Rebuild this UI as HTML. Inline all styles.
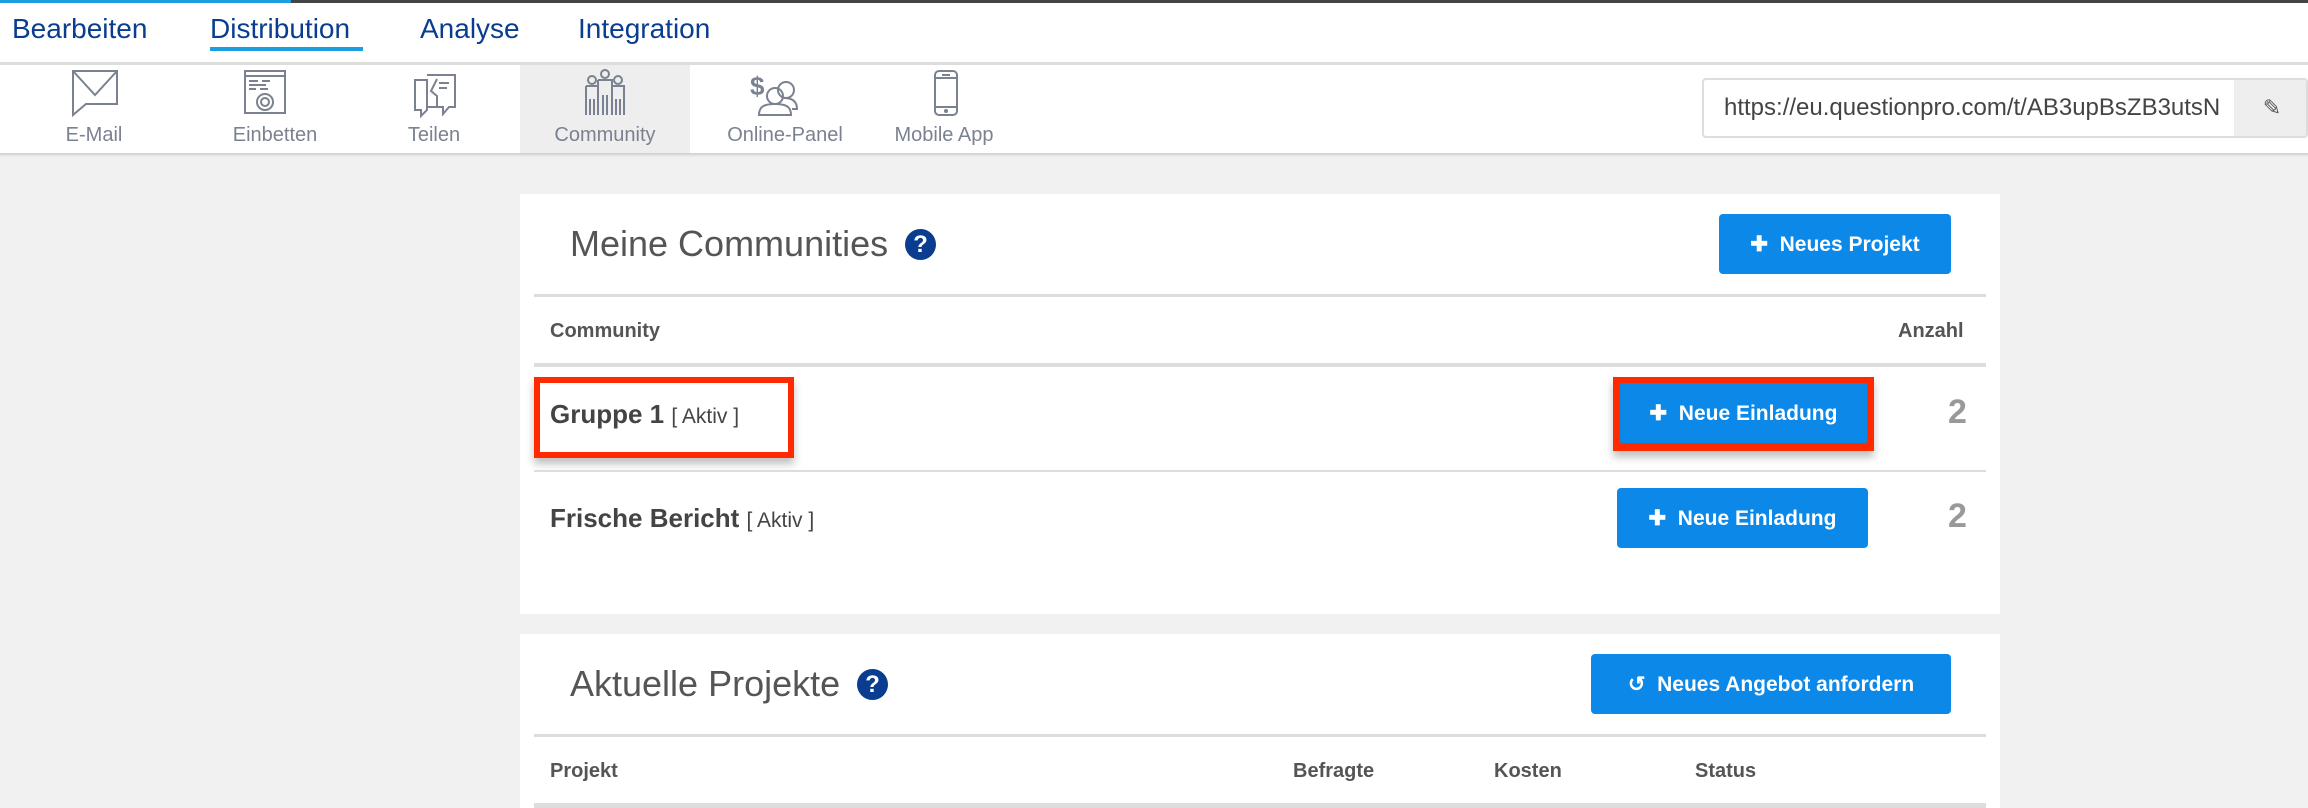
<!DOCTYPE html>
<html><head><meta charset="utf-8"><style>
*{margin:0;padding:0;box-sizing:border-box}
body{width:2308px;height:808px;overflow:hidden;background:#f1f1f1;font-family:"Liberation Sans",sans-serif;position:relative}
.a{position:absolute}
.nav{font-size:28px;color:#0a3d8f;top:13px}
.lbl{font-size:20px;color:#7a8190;top:124px;width:200px;text-align:center}
.btn{position:absolute;background:#0b88e8;color:#fff;font-weight:bold;font-size:21px;border-radius:4px;display:flex;align-items:center;justify-content:center}
.h{font-weight:bold;font-size:20px;color:#555}
.title{font-size:36px;color:#555;font-weight:300}
.q{width:31px;height:31px;border-radius:50%;background:#0a3d8f;color:#fff;font-weight:bold;font-size:24px;text-align:center;line-height:31px}
</style></head><body>
<div class="a" style="left:0;top:0;width:2308px;height:153px;background:#fff"></div>
<div class="a" style="left:0;top:0;width:2308px;height:3px;background:#444"></div>
<div class="a" style="left:0;top:0;width:291px;height:3px;background:#1a9ee0"></div>
<div class="a nav" style="left:12px">Bearbeiten</div>
<div class="a nav" style="left:210px">Distribution</div>
<div class="a" style="left:210px;top:47px;width:153px;height:4px;background:#1a9ee0"></div>
<div class="a nav" style="left:420px">Analyse</div>
<div class="a nav" style="left:578px">Integration</div>
<div class="a" style="left:0;top:62px;width:2308px;height:3px;background:#ddd"></div>
<div class="a" style="left:520px;top:65px;width:170px;height:88px;background:#eee"></div>
<div class="a" style="left:0;top:153px;width:2308px;height:4px;background:linear-gradient(#ccc,#f1f1f1)"></div>
<svg class="a" style="left:0;top:65px" width="1000" height="60" fill="none" stroke="#7a8190" stroke-width="2">
<path d="M73 6H117V39H86L73 50ZM73 6L95 30L117 6"/>
<rect x="245" y="6" width="40" height="42"/><path d="M245 11H285M249 16H258M262 16H270M249 20H266M249 24H256M260 24H268"/><circle cx="265" cy="37" r="8"/><circle cx="265" cy="37" r="4"/>
<path d="M415 15H427V45L421 51V45H415ZM427 10H455V42H449L443 49V42H427M437 14L431 26L437 31V42M439 18H449M439 23H447"/>
<circle cx="605" cy="9" r="4"/><circle cx="592" cy="15" r="4"/><circle cx="618" cy="15" r="4"/><path d="M598 15H612V50M598 15V50M586 21H598M612 21H624V50M586 21V50M603 30V50M607 30V50M590 34V50M594 34V50M616 34V50M620 34V50"/>
<text x="750" y="30" font-size="26" font-weight="bold" fill="#7a8190" stroke="none" font-family="Liberation Sans">$</text>
<circle cx="786" cy="25" r="8"/><circle cx="775" cy="31" r="8"/><path d="M759 50C759 41 765 39 775 39C785 39 791 41 791 50Z"/><path d="M784 33C792 33 797 36 797 44H792"/>
<rect x="935" y="6" width="22" height="44" rx="4"/><path d="M935 13H957M935 42H957M942 10H950"/><circle cx="946" cy="46" r="1"/>
</svg>
<div class="a lbl" style="left:-6px">E-Mail</div>
<div class="a lbl" style="left:175px">Einbetten</div>
<div class="a lbl" style="left:334px">Teilen</div>
<div class="a lbl" style="left:505px">Community</div>
<div class="a lbl" style="left:685px">Online-Panel</div>
<div class="a lbl" style="left:844px">Mobile App</div>
<div class="a" style="left:1702px;top:78px;width:606px;height:60px;border:2px solid #ddd;border-radius:4px;background:#fff;overflow:hidden">
<div class="a" style="left:20px;top:14px;font-size:24px;color:#444;white-space:nowrap;width:510px;overflow:hidden">https://eu.questionpro.com/t/AB3upBsZB3utsN</div>
<div class="a" style="left:530px;top:0;width:76px;height:58px;background:#eee;font-size:22px;color:#555;text-align:center;line-height:56px">✎</div>
</div>
<!-- card 1 -->
<div class="a" style="left:520px;top:194px;width:1480px;height:420px;background:#fff"></div>
<div class="a title" style="left:570px;top:223px">Meine Communities</div>
<div class="a q" style="left:905px;top:229px">?</div>
<div class="btn" style="left:1719px;top:214px;width:232px;height:60px">✚&nbsp; Neues Projekt</div>
<div class="a" style="left:534px;top:294px;width:1452px;height:3px;background:#ddd"></div>
<div class="a h" style="left:550px;top:320px">Community</div>
<div class="a h" style="left:1898px;top:320px">Anzahl</div>
<div class="a" style="left:534px;top:363px;width:1452px;height:4px;background:#ddd"></div>
<div class="a" style="left:534px;top:377px;width:260px;height:81px;border:6px solid #ff2a00;box-shadow:0 6px 8px rgba(0,0,0,.25)"></div>
<div class="a" style="left:550px;top:399px;font-size:26px;color:#444"><b>Gruppe 1</b> <span style="font-size:21px">[ Aktiv ]</span></div>
<div class="a" style="left:1613px;top:377px;width:261px;height:74px;background:#ff2a00;box-shadow:0 6px 8px rgba(0,0,0,.25)"></div>
<div class="btn" style="left:1620px;top:383px;width:247px;height:60px;border-radius:2px">✚&nbsp; Neue Einladung</div>
<div class="a" style="left:1948px;top:393px;font-size:34px;font-weight:bold;color:#999">2</div>
<div class="a" style="left:534px;top:470px;width:1452px;height:2px;background:#ddd"></div>
<div class="a" style="left:550px;top:503px;font-size:26px;color:#444"><b>Frische Bericht</b> <span style="font-size:21px">[ Aktiv ]</span></div>
<div class="btn" style="left:1617px;top:488px;width:251px;height:60px">✚&nbsp; Neue Einladung</div>
<div class="a" style="left:1948px;top:497px;font-size:34px;font-weight:bold;color:#999">2</div>
<!-- card 2 -->
<div class="a" style="left:520px;top:634px;width:1480px;height:174px;background:#fff"></div>
<div class="a title" style="left:570px;top:663px">Aktuelle Projekte</div>
<div class="a q" style="left:857px;top:669px">?</div>
<div class="btn" style="left:1591px;top:654px;width:360px;height:60px">↺&nbsp; Neues Angebot anfordern</div>
<div class="a" style="left:534px;top:734px;width:1452px;height:3px;background:#ddd"></div>
<div class="a h" style="left:550px;top:760px">Projekt</div>
<div class="a h" style="left:1293px;top:760px">Befragte</div>
<div class="a h" style="left:1494px;top:760px">Kosten</div>
<div class="a h" style="left:1695px;top:760px">Status</div>
<div class="a" style="left:534px;top:803px;width:1452px;height:5px;background:#ddd"></div>
</body></html>
